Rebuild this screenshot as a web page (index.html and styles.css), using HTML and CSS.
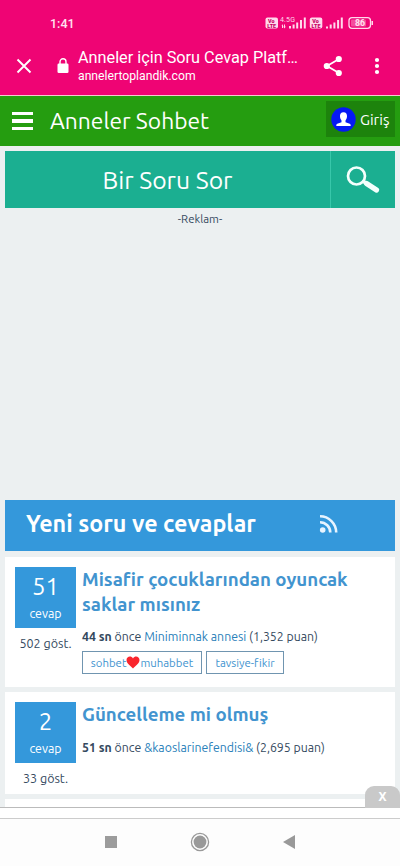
FILE: index.html
```html
<!DOCTYPE html>
<html lang="tr">
<head>
<meta charset="utf-8">
<title>Anneler için Soru Cevap Platformu</title>
<link rel="stylesheet" href="styles.css">
</head>
<body>
<div class="screen">
  <header class="browser">
    <div class="status">
      <span class="clock">1:41</span>
      <svg class="signals" width="110" height="18" viewBox="0 0 110 18">
        <g fill="#ffd9ec">
          <rect x="0.5" y="3.5" width="12.5" height="11" rx="2"/>
          <rect x="44.800" y="3.500" width="12.500" height="11" rx="2"/>
          <path d="M24 12h2v2.500h-2zM27.600 10.500h2v4h-2zM31.200 8.500h2v6h-2zM35 6h2v8.500h-2zM38.800 3.500h2v11h-2zM61 12.500h2v2h-2zM64.700 10.500h2v4h-2zM68.400 8.500h2v6h-2zM72.100 6h2v8.500h-2zM75.800 3.500h2v11h-2z"/>
          <path d="M16.500 12l1.500-2v4h-1v-2zM19 10.500h1v2h.800l-1.300 2-1.300-2h.800z"/>
          <rect x="86" y="5.500" width="15" height="7" rx="1" opacity=".35"/>
          <rect x="106.500" y="7" width="1.500" height="4"/>
        </g>
        <rect x="84" y="3.700" width="21.500" height="10.600" rx="3" fill="none" stroke="#ffd9ec" stroke-width="1.300"/>
        <g class="tiny"><text x="3" y="8.800">Vo</text><text x="2.300" y="13.800">LTE</text><text x="47.300" y="8.800">Vo</text><text x="46.600" y="13.800">LTE</text></g>
        <text class="net" x="15" y="8" textLength="15">4.5G</text>
        <text class="charge" x="90" y="12.100">86</text>
      </svg>
    </div>
    <div class="address">
      <svg class="close" width="16" height="16" viewBox="0 0 16 16"><path d="M1.500 1.500l13 13M14.500 1.500l-13 13" stroke="#fff" stroke-width="1.900"/></svg>
      <svg class="lock" width="12" height="16" viewBox="0 0 12 16"><rect x=".5" y="5.500" width="11" height="9.500" rx="1.300" fill="#fff"/><path d="M3 6V3.800a3 3 0 0 1 6 0V6" fill="none" stroke="#fff" stroke-width="1.400"/></svg>
      <div class="page"><div class="page-title">Anneler için Soru Cevap Platf…</div><div class="page-host">annelertoplandik.com</div></div>
      <svg class="share" width="20" height="22" viewBox="0 0 20 22"><path d="M16 4L4 11l12 7" fill="none" stroke="#fff" stroke-width="1.800"/><circle cx="15.800" cy="4" r="3.100" fill="#fff"/><circle cx="3.800" cy="11" r="3.100" fill="#fff"/><circle cx="15.800" cy="18" r="3.100" fill="#fff"/></svg>
      <svg class="more" width="6" height="18" viewBox="0 0 6 18"><g fill="#fff"><circle cx="3" cy="3" r="2.100"/><circle cx="3" cy="9" r="2.100"/><circle cx="3" cy="15" r="2.100"/></g></svg>
    </div>
  </header>

  <nav class="site">
    <div class="burger"><i></i><i></i><i></i></div>
    <div class="brand">Anneler Sohbet</div>
    <div class="login">
      <svg width="25" height="25" viewBox="0 0 25 25"><circle cx="12.500" cy="12.500" r="12.200" fill="#0518f5"/><path d="M12.500 5.300c2.600 0 3.800 1.900 3.500 4.500-.2 1.900-1 3-1.500 3.700v1.700l4.200 1.600c.9.400 1 1.200 1 2.200H5.300c0-1 .1-1.800 1-2.200l4.200-1.600v-1.700C10 12.800 9.200 11.700 9 9.800c-.3-2.600.9-4.500 3.500-4.500z" fill="#fff"/></svg>
      <span>Giriş</span>
    </div>
  </nav>

  <main>
    <div class="ask">
      <div class="ask-link"><span>Bir Soru Sor</span></div>
      <div class="search"><svg width="36" height="30" viewBox="0 0 36 30"><circle cx="11.500" cy="11" r="8.500" fill="none" stroke="#f4fffc" stroke-width="2.700"/><path d="M18.500 16.500l4 2.500" stroke="#f4fffc" stroke-width="3.500"/><path d="M21.500 18.500l10 6.500" stroke="#f4fffc" stroke-width="5.200" stroke-linecap="round"/></svg></div>
    </div>
    <div class="ad"><span>-Reklam-</span></div>
    <div class="heading">
      <h1>Yeni soru ve cevaplar</h1>
      <svg width="20" height="20" viewBox="0 0 20 20"><circle cx="3.700" cy="16" r="2.800" fill="#e7f4ff"/><path d="M1 8.200a10.300 10.300 0 0 1 10.300 10.300M1 2.300a16.200 16.200 0 0 1 16.200 16.200" fill="none" stroke="#e7f4ff" stroke-width="2.600"/></svg>
    </div>
    <article class="card first">
      <div class="stats"><div class="count"><b>51</b><span>cevap</span></div><div class="views">502 göst.</div></div>
      <div class="body">
        <h2>Misafir çocuklarından oyuncak<br>saklar mısınız</h2>
        <p class="meta"><strong>44 sn</strong> önce <a>Miniminnak annesi</a> (1,352 puan)</p>
        <div class="tags"><span class="tag">sohbet<svg width="14" height="13" viewBox="0 0 14 13"><path d="M7 12.500C4.500 10 .5 7.600.5 4.100.5.300 5.300-.7 7 2.600 8.700-.7 13.500.3 13.500 4.100 13.500 7.600 9.500 10 7 12.500z" fill="#f9252d"/></svg>muhabbet</span><span class="tag second">tavsiye-fikir</span></div>
      </div>
    </article>
    <article class="card next">
      <div class="stats"><div class="count"><b>2</b><span>cevap</span></div><div class="views">33 göst.</div></div>
      <div class="body">
        <h2>Güncelleme mi olmuş</h2>
        <p class="meta late"><strong>51 sn</strong> önce <a>&amp;kaoslarinefendisi&amp;</a> (2,695 puan)</p>
      </div>
    </article>
    <article class="card peek"></article>
  </main>

  <div class="anchor-ad"><span class="dismiss">X</span></div>
  <footer class="system">
    <svg width="12" height="12"><rect width="12" height="12" fill="#9c9c9c"/></svg>
    <svg width="20" height="20" viewBox="0 0 20 20"><circle cx="10" cy="10" r="8.600" fill="none" stroke="#999" stroke-width="1.300"/><circle cx="10" cy="10" r="6.400" fill="#999"/></svg>
    <svg width="12" height="14" viewBox="0 0 12 14"><path d="M0 7L12 0v14z" fill="#999"/></svg>
  </footer>
</div>
</body>
</html>
```
FILE: styles.css
```css
* { box-sizing: border-box; }
body { margin: 0; font-family: Ubuntu, "Noto Sans", sans-serif; color: #34495e; background: #ecf0f1; }
svg { display: block; flex: none; }
h1, h2, p { margin: 0; }
.screen { width: 400px; height: 866px; display: flex; flex-direction: column; overflow: hidden; }
.browser { height: 96px; flex: none; background: #ef0474; border-bottom: 1px solid #f5c9d0; font-family: Roboto, sans-serif; color: #fff; }
.status { height: 46px; padding: 14px 25px 0 50px; display: flex; justify-content: space-between; }
.clock { font-size: 12.5px; line-height: 19px; font-weight: 500; color: #ffe3f1; }
.signals text { font-family: Roboto, sans-serif; }
.tiny { font-size: 5.4px; font-weight: 900; fill: #c60062; }
.net { font-size: 7px; fill: #ffd9ec; }
.charge { font-size: 8.8px; font-weight: 700; fill: #ffe3f1; }
.address { height: 40px; padding-left: 16px; display: flex; align-items: center; }
.lock { margin-left: 25px; }
.page { width: 246px; margin-left: 9px; }
.page-title { font-size: 16.250px; line-height: 21px; white-space: nowrap; }
.page-host { font-size: 12.200px; line-height: 17px; }
.share { margin-left: -1px; }
.more { margin-left: 31px; }
.site { height: 50px; flex: none; background: #259d10; color: #fff; display: flex; align-items: center; padding: 0 5px 0 12px; }
.burger { width: 21px; display: grid; gap: 4px; }
.burger i { height: 3.300px; background: #fff; }
.brand { flex: 1; margin-left: 17px; font-size: 22.800px; line-height: 30px; white-space: nowrap; }
.login { width: 69px; height: 36px; margin-top: -4px; padding-left: 5px; display: flex; align-items: center; gap: 4px; background: #1d830c; font-size: 15px; }
main { height: 661px; padding: 5px 5px 0; overflow: hidden; }
.ask { height: 57px; display: flex; background: #1baf91; color: #fff; }
.ask-link { width: 325px; display: grid; place-items: center; font-size: 24.700px; }
.search { flex: 1; border-left: 1px solid #38c7aa; padding: 14px 0 0 14px; }
.ad { height: 292px; padding-top: 3px; text-align: center; font-size: 11.400px; line-height: 15px; }
.heading { height: 51px; background: #3498db; color: #fff; display: flex; align-items: center; justify-content: space-between; padding: 0 56px 5px 21px; }
.heading svg { margin-top: 2px; }
h1 { font-size: 23.300px; line-height: 30px; white-space: nowrap; }
.card { background: #fff; margin-top: 5px; display: flex; padding: 10px; }
.first { height: 130px; margin-top: 6px; }
.next { height: 102px; }
.peek { height: 20px; }
.stats { width: 61px; flex: none; text-align: center; }
.count { height: 61px; background: #3498db; color: #fff; display: flex; flex-direction: column; align-items: center; }
.count b { font-size: 24px; line-height: 30px; font-weight: 400; margin-top: 5px; }
.count span { font-size: 12.400px; line-height: 18px; margin-top: 2px; }
.views { font-size: 12.500px; line-height: 18px; margin-top: 6px; white-space: nowrap; }
.body { margin-left: 6px; }
h2 { font-size: 18.700px; line-height: 25px; color: #4294cf; white-space: nowrap; }
.meta { font-size: 12.300px; line-height: 18px; margin-top: 11px; white-space: nowrap; }
.meta a { color: #2980b9; }
.tags { display: flex; gap: 4px; margin-top: 5px; }
.tag { width: 120px; height: 23px; border: 1px solid #7095b0; display: flex; align-items: center; justify-content: center; color: #4294cf; font-size: 11.400px; white-space: nowrap; }
.second { width: 78px; }
.late { margin-top: 12px; }
.anchor-ad { height: 12px; flex: none; position: relative; background: #fff; border-top: 1px solid #bbb; border-bottom: 1px solid #ccc; }
.dismiss { position: absolute; right: 0; bottom: 10px; width: 35px; height: 22px; border-radius: 9px 9px 0 0; background: #c9c9c9; color: #fff; font: 700 12px/22px "Noto Sans", sans-serif; text-align: center; }
.system { flex: 1; background: #fdfdfd; display: flex; align-items: center; justify-content: center; padding: 0 1px 1px 0; gap: 73px; }
```
